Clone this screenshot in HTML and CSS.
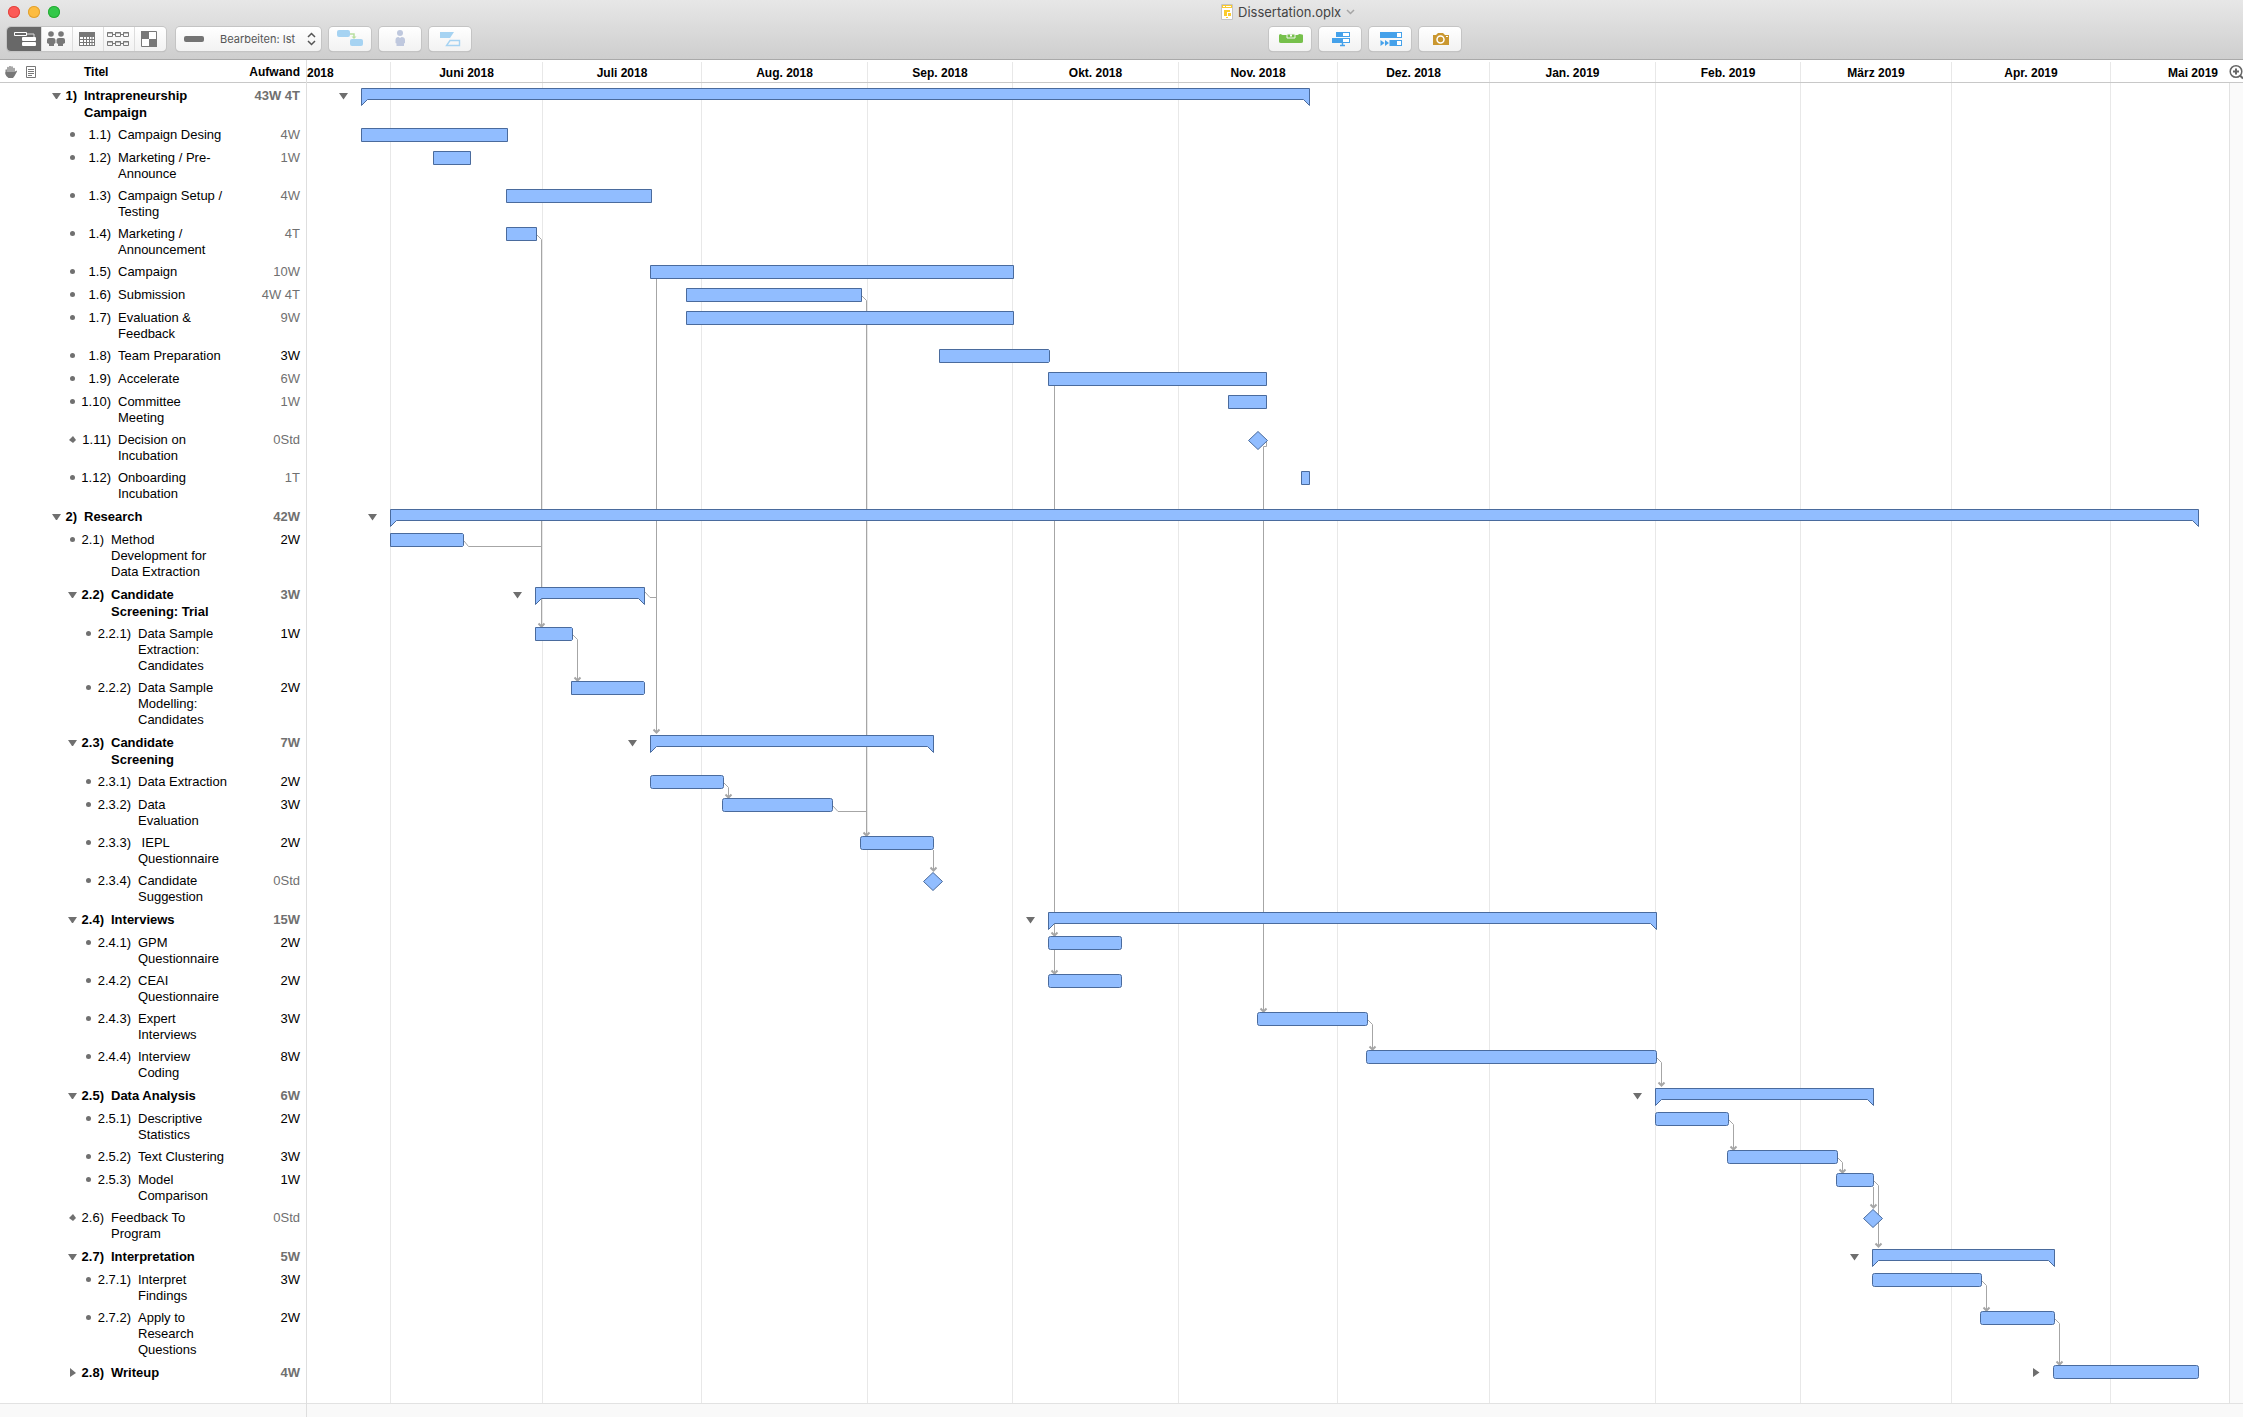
FILE: index.html
```html
<!DOCTYPE html>
<html lang="de">
<head>
<meta charset="utf-8">
<title>Dissertation.oplx</title>
<link rel="stylesheet" href="styles.css">
</head>
<body>
<header class="chrome">
  <div class="titlebar">
    <div class="lights">
      <button class="light close" aria-label="Schließen"></button>
      <button class="light minimize" aria-label="Minimieren"></button>
      <button class="light maximize" aria-label="Maximieren"></button>
    </div>
    <div class="space-before"></div>
    <h1 class="doc-title">
      <svg width="12" height="16" viewBox="0 0 12 16" aria-hidden="true"><path d="M.5.5h11v15H.5z" fill="#fff" stroke="#c4c4c4"/><path d="M1 1h10v3H1zM3 6h6v2H3zM3 8h3v4H3zM7 9h3v3H7zM5 13h2v1H5z" fill="#fbcb2d"/><path d="M2 2h2v1H2zM5 2h5v1H5z" fill="#fff"/></svg>
      <span>Dissertation.oplx</span>
      <svg width="9" height="6" viewBox="0 0 9 6" aria-hidden="true"><path d="M1 1l3.500 3.500L8 1" fill="none" stroke="#a5a5a5" stroke-width="1.500"/></svg>
    </h1>
    <div class="space-after"></div>
  </div>
  <div class="toolbar">
    <div class="segments">
      <button class="segment active" aria-label="Vorgänge"><svg width="34" height="24" viewBox="0 0 34 24"><path d="M7.500 5.500h12v3h-12z" fill="none" stroke="#fff"/><path d="M20 7h7v3" fill="none" stroke="#ddd"/><path d="M16 10h12q1 0 1 1v2q0 1-1 1H16q-1 0-1-1v-2q0-1 1-1zM16 15h12q1 0 1 1v2q0 1-1 1H16q-1 0-1-1v-2q0-1 1-1z" fill="#fff"/></svg></button>
      <button class="segment" aria-label="Ressourcen"><svg width="31" height="24" viewBox="0 0 31 24" fill="#787878"><circle cx="10" cy="7" r="2.800"/><circle cx="20" cy="7" r="2.800"/><path d="M6 13q0-2 2-2h4q2.500 0 2.500 2v3l-1.500 1v2H8v-2l-2-1zM15.500 13q0-2 2.500-2h4q2 0 2 2v3l-2 1v2h-5v-2l-1.500-1z"/></svg></button>
      <button class="segment" aria-label="Kalender"><svg width="31" height="24" viewBox="0 0 31 24"><path d="M7 5h16v14H7z" fill="#787878"/><path d="M8 10h14v8H8z" fill="#fff"/><path d="M11.500 10v8M14.500 10v8M17.500 10v8M20 10v8M8 12.500h14M8 15.500h14" stroke="#787878"/></svg></button>
      <button class="segment" aria-label="Netzwerk"><svg width="31" height="24" viewBox="0 0 31 24" fill="none" stroke="#787878"><path d="M4.500 5.500h5v4h-5zM12.500 5.500h5v4h-5zM20.500 5.500h5v4h-5zM4.500 14.500h5v4h-5zM12.500 14.500h5v4h-5zM20.500 14.500h5v4h-5zM9 7.500h3M17 7.500h3M9 16.500h3M17 16.500h3M4 6h6M12 6h6M20 6h6M4 15h6M12 15h6M20 15h6"/></svg></button>
      <button class="segment" aria-label="Stile"><svg width="32" height="24" viewBox="0 0 32 24"><path d="M7.500 4.500h15v15h-15z" fill="#fff" stroke="#787878"/><path d="M7 4h8v8H7zM15 12h8v8h-8z" fill="#787878"/></svg></button>
    </div>
    <label class="mode">
      <span class="mode-pill"></span>
      <select class="mode-select" aria-label="Bearbeitungsmodus"><option>Bearbeiten: Ist</option></select>
      <svg width="9" height="14" viewBox="0 0 9 14" aria-hidden="true"><path d="M1 5l3.500-3.500L8 5M1 9l3.500 3.500L8 9" fill="none" stroke="#555" stroke-width="1.500"/></svg>
    </label>
    <button class="tool" aria-label="Verbinden"><svg width="42" height="24" viewBox="0 0 42 24"><rect x="8" y="3" width="13" height="7" rx="2" fill="#a6d3f2"/><rect x="21" y="12" width="13" height="7" rx="2" fill="#a6d3f2"/><path d="M21 7h4v3" fill="none" stroke="#b9dfa0" stroke-width="1.500"/><path d="M22.500 9.500h5l-2.500 2.500z" fill="#b9dfa0"/></svg></button>
    <button class="tool" aria-label="Zuweisen"><svg width="42" height="24" viewBox="0 0 42 24" fill="#bfc8de"><circle cx="21" cy="6" r="3"/><path d="M16.500 13q0-3 3-3l1.500 1 1.500-1q3.500 0 3.500 3v3l-1 .5V19h-7.500v-2.500l-1-.5z"/></svg></button>
    <button class="tool" aria-label="Teilen"><svg width="42" height="24" viewBox="0 0 42 24"><path d="M11 5h14l-4 6H11z" fill="#a6d3f2"/><path d="M21 13.500h9.500v5h-13z" fill="none" stroke="#a6d3f2" stroke-width="1.400"/></svg></button>
    <div class="space-left"></div>
    <button class="tool" aria-label="Ausgleichen"><svg width="42" height="24" viewBox="0 0 42 24"><path d="M10 8.500q0-1.500 1.500-1.500l2 1h15l2-1Q34 7 34 8.500v6q0 1.500-2 1.500H12q-2 0-2-1.500z" fill="#76c04b"/><path d="M18 7h8v4h-8z" fill="#76c04b" stroke="#f5f5f5"/><path d="M21 7.500h2v2h-2z" fill="#fff"/></svg></button>
    <button class="tool" aria-label="Nachholen"><svg width="42" height="24" viewBox="0 0 42 24"><path d="M17 5h14v5H17zM13 11h18v5H13z" fill="#45a1ea"/><path d="M24 6h6v3h-6zM24 12h6v3h-6z" fill="#fff"/><path d="M23.500 15v3M21 18.500h5" stroke="#45a1ea" stroke-width="1.500"/></svg></button>
    <button class="tool" aria-label="Neu planen"><svg width="42" height="24" viewBox="0 0 42 24"><path d="M11 5h22v6H11zM20.500 13H33v6H20.500zM11.500 13l4 3-4 3zM16 13l4 3-4 3z" fill="#45a1ea"/><path d="M28 6h4v4h-4zM28 14h4v4h-4z" fill="#fff"/></svg></button>
    <button class="tool" aria-label="Momentaufnahme"><svg width="42" height="24" viewBox="0 0 42 24"><path d="M14 8h3l2-2h5l2 2h4v10H14z" fill="#ca972f"/><circle cx="21.500" cy="12.500" r="3.500" fill="none" stroke="#fff" stroke-width="1.500"/><path d="M27 9h2v1h-2z" fill="#fff"/></svg></button>
    <div class="space-right"></div>
  </div>
</header>
<main class="project">
  <section class="outline">
    <table class="tasks">
      <colgroup><col class="c-flag"><col class="c-note"><col class="c-title"><col></colgroup>
      <thead>
        <tr>
          <th><svg class="col-icon" width="12" height="12" viewBox="0 0 12 12" role="img" aria-label="Verstöße"><path d="M3 1.500v5M5 .5v6M7 .8v6M9 2.500v5M1.200 4v4" stroke="#777" stroke-width="1.300" stroke-linecap="round"/><path d="M.5 6h9l2-1.500.5 1L9.500 10 8 12H3.500Q.5 10 .5 8z" fill="#777"/></svg></th>
          <th><svg class="col-icon" width="10" height="12" viewBox="0 0 10 12" role="img" aria-label="Notiz"><path d="M.5.5h9v11h-9z" fill="#fff" stroke="#777"/><path d="M2 3.500h6M2 5.500h6M2 7.500h6M2 9.500h4" stroke="#777"/></svg></th>
          <th class="h-title">Titel</th>
          <th class="h-effort">Aufwand</th>
        </tr>
      </thead>
      <tbody>
        <tr class="group"><td></td><td></td><td><div class="task l1"><i class="open"></i><span class="num">1)</span><span>Intrapreneurship Campaign</span></div></td><td class="effort auto">43W 4T</td></tr>
        <tr><td></td><td></td><td><div class="task l2 wide"><i class="dot"></i><span class="num">1.1)</span><span>Campaign Desing</span></div></td><td class="effort auto">4W</td></tr>
        <tr><td></td><td></td><td><div class="task l2 wide"><i class="dot"></i><span class="num">1.2)</span><span>Marketing / Pre-Announce</span></div></td><td class="effort auto">1W</td></tr>
        <tr><td></td><td></td><td><div class="task l2 wide"><i class="dot"></i><span class="num">1.3)</span><span>Campaign Setup / Testing</span></div></td><td class="effort auto">4W</td></tr>
        <tr><td></td><td></td><td><div class="task l2 wide"><i class="dot"></i><span class="num">1.4)</span><span>Marketing / Announcement</span></div></td><td class="effort auto">4T</td></tr>
        <tr><td></td><td></td><td><div class="task l2 wide"><i class="dot"></i><span class="num">1.5)</span><span>Campaign</span></div></td><td class="effort auto">10W</td></tr>
        <tr><td></td><td></td><td><div class="task l2 wide"><i class="dot"></i><span class="num">1.6)</span><span>Submission</span></div></td><td class="effort auto">4W 4T</td></tr>
        <tr><td></td><td></td><td><div class="task l2 wide"><i class="dot"></i><span class="num">1.7)</span><span>Evaluation &amp; Feedback</span></div></td><td class="effort auto">9W</td></tr>
        <tr><td></td><td></td><td><div class="task l2 wide"><i class="dot"></i><span class="num">1.8)</span><span>Team Preparation</span></div></td><td class="effort">3W</td></tr>
        <tr><td></td><td></td><td><div class="task l2 wide"><i class="dot"></i><span class="num">1.9)</span><span>Accelerate</span></div></td><td class="effort auto">6W</td></tr>
        <tr><td></td><td></td><td><div class="task l2 wide"><i class="dot"></i><span class="num">1.10)</span><span>Committee Meeting</span></div></td><td class="effort auto">1W</td></tr>
        <tr><td></td><td></td><td><div class="task l2 wide"><i class="gem"></i><span class="num">1.11)</span><span>Decision on Incubation</span></div></td><td class="effort auto">0Std</td></tr>
        <tr><td></td><td></td><td><div class="task l2 wide"><i class="dot"></i><span class="num">1.12)</span><span>Onboarding Incubation</span></div></td><td class="effort auto">1T</td></tr>
        <tr class="group"><td></td><td></td><td><div class="task l1"><i class="open"></i><span class="num">2)</span><span>Research</span></div></td><td class="effort auto">42W</td></tr>
        <tr><td></td><td></td><td><div class="task l2"><i class="dot"></i><span class="num">2.1)</span><span>Method Development for Data Extraction</span></div></td><td class="effort">2W</td></tr>
        <tr class="group"><td></td><td></td><td><div class="task l2"><i class="open"></i><span class="num">2.2)</span><span>Candidate Screening: Trial</span></div></td><td class="effort auto">3W</td></tr>
        <tr><td></td><td></td><td><div class="task l3"><i class="dot"></i><span class="num">2.2.1)</span><span>Data Sample Extraction: Candidates</span></div></td><td class="effort">1W</td></tr>
        <tr><td></td><td></td><td><div class="task l3"><i class="dot"></i><span class="num">2.2.2)</span><span>Data Sample Modelling: Candidates</span></div></td><td class="effort">2W</td></tr>
        <tr class="group"><td></td><td></td><td><div class="task l2"><i class="open"></i><span class="num">2.3)</span><span>Candidate Screening</span></div></td><td class="effort auto">7W</td></tr>
        <tr><td></td><td></td><td><div class="task l3"><i class="dot"></i><span class="num">2.3.1)</span><span>Data Extraction</span></div></td><td class="effort">2W</td></tr>
        <tr><td></td><td></td><td><div class="task l3"><i class="dot"></i><span class="num">2.3.2)</span><span>Data Evaluation</span></div></td><td class="effort">3W</td></tr>
        <tr><td></td><td></td><td><div class="task l3"><i class="dot"></i><span class="num">2.3.3)</span><span>&nbsp;IEPL Questionnaire</span></div></td><td class="effort">2W</td></tr>
        <tr><td></td><td></td><td><div class="task l3"><i class="dot"></i><span class="num">2.3.4)</span><span>Candidate Suggestion</span></div></td><td class="effort auto">0Std</td></tr>
        <tr class="group"><td></td><td></td><td><div class="task l2"><i class="open"></i><span class="num">2.4)</span><span>Interviews</span></div></td><td class="effort auto">15W</td></tr>
        <tr><td></td><td></td><td><div class="task l3"><i class="dot"></i><span class="num">2.4.1)</span><span>GPM Questionnaire</span></div></td><td class="effort">2W</td></tr>
        <tr><td></td><td></td><td><div class="task l3"><i class="dot"></i><span class="num">2.4.2)</span><span>CEAI Questionnaire</span></div></td><td class="effort">2W</td></tr>
        <tr><td></td><td></td><td><div class="task l3"><i class="dot"></i><span class="num">2.4.3)</span><span>Expert Interviews</span></div></td><td class="effort">3W</td></tr>
        <tr><td></td><td></td><td><div class="task l3"><i class="dot"></i><span class="num">2.4.4)</span><span>Interview Coding</span></div></td><td class="effort">8W</td></tr>
        <tr class="group"><td></td><td></td><td><div class="task l2"><i class="open"></i><span class="num">2.5)</span><span>Data Analysis</span></div></td><td class="effort auto">6W</td></tr>
        <tr><td></td><td></td><td><div class="task l3"><i class="dot"></i><span class="num">2.5.1)</span><span>Descriptive Statistics</span></div></td><td class="effort">2W</td></tr>
        <tr><td></td><td></td><td><div class="task l3"><i class="dot"></i><span class="num">2.5.2)</span><span>Text Clustering</span></div></td><td class="effort">3W</td></tr>
        <tr><td></td><td></td><td><div class="task l3"><i class="dot"></i><span class="num">2.5.3)</span><span>Model Comparison</span></div></td><td class="effort">1W</td></tr>
        <tr><td></td><td></td><td><div class="task l2"><i class="gem"></i><span class="num">2.6)</span><span>Feedback To Program</span></div></td><td class="effort auto">0Std</td></tr>
        <tr class="group"><td></td><td></td><td><div class="task l2"><i class="open"></i><span class="num">2.7)</span><span>Interpretation</span></div></td><td class="effort auto">5W</td></tr>
        <tr><td></td><td></td><td><div class="task l3"><i class="dot"></i><span class="num">2.7.1)</span><span>Interpret Findings</span></div></td><td class="effort">3W</td></tr>
        <tr><td></td><td></td><td><div class="task l3"><i class="dot"></i><span class="num">2.7.2)</span><span>Apply to Research Questions</span></div></td><td class="effort">2W</td></tr>
        <tr class="group"><td></td><td></td><td><div class="task l2"><i class="closed"></i><span class="num">2.8)</span><span>Writeup</span></div></td><td class="effort auto">4W</td></tr>
      </tbody>
    </table>
    <div class="scroll-strip"></div>
  </section>
  <section class="timeline">
    <div class="scale">
      <div class="months">
        <span class="month first">2018</span><span class="month">Juni 2018</span><span class="month">Juli 2018</span><span class="month">Aug. 2018</span><span class="month">Sep. 2018</span><span class="month">Okt. 2018</span><span class="month">Nov. 2018</span><span class="month">Dez. 2018</span><span class="month">Jan. 2019</span><span class="month">Feb. 2019</span><span class="month">März 2019</span><span class="month">Apr. 2019</span><span class="month last">Mai 2019</span>
      </div>
      <button class="zoom-in" aria-label="Vergrößern"><svg width="14" height="16" viewBox="0 0 14 16"><circle cx="7" cy="7.500" r="5.800" fill="none" stroke="#666" stroke-width="1.500"/><path d="M4 7.500h6M7 4.500v6" stroke="#666" stroke-width="2"/><path d="M11 11.500l3 3" stroke="#666" stroke-width="2"/></svg></button>
    </div>
    <div class="canvas">
      <svg class="gantt" viewBox="307 83 1922 1320" preserveAspectRatio="none" role="img" aria-label="Gantt-Diagramm">
        <path class="grid" d="M390.500 83v1320M542.500 83v1320M701.500 83v1320M867.500 83v1320M1012.500 83v1320M1178.500 83v1320M1337.500 83v1320M1489.500 83v1320M1655.500 83v1320M1800.500 83v1320M1951.500 83v1320M2110.500 83v1320"/>
        <g class="links">
          <path d="M537 235l4.500 4.500V626"/><path d="M464 541l4.500 5.500h73"/>
          <path d="M656.500 279V733"/><path d="M645 592l5 5.500h6.500"/>
          <path d="M862 296l4.500 4.500V835"/><path d="M833 806l5 5.500h28.500"/>
          <path d="M573 635l4.500 4.500V680"/><path d="M724 783l4.500 4.500V797"/><path d="M933.500 850V870"/>
          <path d="M1054.500 386V973"/><path d="M1266.500 441v5.500h-3V1011"/>
          <path d="M1368 1020l4.500 4.500V1049"/><path d="M1657 1058l4.500 4.500V1086"/>
          <path d="M1729 1120l4.500 4.500V1149"/><path d="M1838 1158l4.500 4.500V1172"/>
          <path d="M1874 1181l4.500 4.500V1247"/><path d="M1873.500 1187V1207"/>
          <path d="M1982 1281l4.500 4.500V1310"/><path d="M2055 1319l4.500 4.500V1364"/>
        </g>
        <g class="heads">
          <path d="M538.500 623.500l3 3 3-3M653.500 729.500l3 3 3-3M863.500 832.500l3 3 3-3M574.500 677.500l3 3 3-3M725.500 794.500l3 3 3-3M930.500 867.500l3 3 3-3M1051.500 932.500l3 3 3-3M1051.500 970.500l3 3 3-3M1260.500 1008.500l3 3 3-3M1369.500 1046.500l3 3 3-3M1658.500 1082.500l3 3 3-3M1730.500 1146.500l3 3 3-3M1839.500 1169.500l3 3 3-3M1875.500 1243.500l3 3 3-3M1870.500 1204.500l3 3 3-3M1983.500 1307.500l3 3 3-3M2056.500 1361.500l3 3 3-3"/>
        </g>
        <g class="bars">
          <path d="M361.500 88.500H1309.500V105.500L1303.500 99.500H367.500L361.500 105.500z"/>
          <path d="M390.500 509.500H2198.500V526.500L2192.500 520.500H396.500L390.500 526.500z"/>
          <path d="M535.500 587.500H644.500V604.500L638.500 598.500H541.500L535.500 604.500z"/>
          <path d="M650.500 735.500H933.500V752.500L927.500 746.500H656.500L650.500 752.500z"/>
          <path d="M1048.500 912.500H1656.500V929.500L1650.500 923.500H1054.500L1048.500 929.500z"/>
          <path d="M1655.500 1088.500H1873.500V1105.500L1867.500 1099.500H1661.500L1655.500 1105.500z"/>
          <path d="M1872.500 1249.500H2054.500V1266.500L2048.500 1260.500H1878.500L1872.500 1266.500z"/>
          <rect x="361.500" y="128.500" width="146" height="13"/>
          <rect x="433.500" y="151.500" width="37" height="13"/>
          <rect x="506.500" y="189.500" width="145" height="13"/>
          <rect x="506.500" y="227.500" width="30" height="13"/>
          <rect x="650.500" y="265.500" width="363" height="13"/>
          <rect x="686.500" y="288.500" width="175" height="13"/>
          <rect x="686.500" y="311.500" width="327" height="13"/>
          <path d="M939.500 349.500h109l1 1v11l-1 1h-109z"/>
          <rect x="1048.500" y="372.500" width="218" height="13"/>
          <rect x="1228.500" y="395.500" width="38" height="13"/>
          <rect x="1301.500" y="471.500" width="8" height="13"/>
          <path d="M390.500 533.500h72l1 1v11l-1 1h-72zM535.500 627.500h36l1 1v11l-1 1h-36zM571.500 681.500h72l1 1v11l-1 1h-72z"/>
          <g class="round">
            <rect x="650.500" y="775.500" width="73" height="13" rx="2"/>
            <rect x="722.500" y="798.500" width="110" height="13" rx="2"/>
            <rect x="860.500" y="836.500" width="73" height="13" rx="2"/>
            <rect x="1048.500" y="936.500" width="73" height="13" rx="2"/>
            <rect x="1048.500" y="974.500" width="73" height="13" rx="2"/>
            <rect x="1257.500" y="1012.500" width="110" height="13" rx="2"/>
            <rect x="1366.500" y="1050.500" width="290" height="13" rx="2"/>
            <rect x="1655.500" y="1112.500" width="73" height="13" rx="2"/>
            <rect x="1727.500" y="1150.500" width="110" height="13" rx="2"/>
            <rect x="1836.500" y="1173.500" width="37" height="13" rx="2"/>
            <rect x="1872.500" y="1273.500" width="109" height="13" rx="2"/>
            <rect x="1980.500" y="1311.500" width="74" height="13" rx="2"/>
            <rect x="2053.500" y="1365.500" width="145" height="13" rx="2"/>
          </g>
          <path d="M1258 431.500l9.500 9-9.500 9-9.500-9zM933 872.500l9.500 9-9.500 9-9.500-9zM1873 1209.500l9.500 9-9.500 9-9.500-9z"/>
        </g>
        <path class="toggles" d="M339 93h9l-4.500 6.500zM368 514h9l-4.500 6.500zM513 592h9l-4.500 6.500zM628 740h9l-4.500 6.500zM1026 917h9l-4.500 6.500zM1633 1093h9l-4.500 6.500zM1850 1254h9l-4.500 6.500zM2033 1368v9l6.500-4.500z"/>
      </svg>
      <div class="gutter"></div>
    </div>
    <div class="scroll-strip"></div>
  </section>
</main>
</body>
</html>
```
FILE: styles.css
```css
* { box-sizing: border-box; }

body {
  margin: 0;
  min-height: 100vh;
  display: flex;
  flex-direction: column;
  background: #fff;
  color: #000;
  font-family: "Liberation Sans", Arial, sans-serif;
  font-size: 13px;
  line-height: 16px;
}

button { border: 0; padding: 0; background: none; }
svg { display: block; }

/* Window chrome */
.chrome {
  height: 60px;
  border-bottom: 1px solid #a9a9a9;
  background: linear-gradient(#e7e7e7, #cecece);
  font-family: Inter, sans-serif;
}
.titlebar {
  display: flex;
  align-items: center;
  height: 23px;
  padding-left: 8px;
}
.lights { display: flex; gap: 8px; }
.light { width: 12px; height: 12px; border-radius: 50%; }
.close { background: #fc5b57; box-shadow: inset 0 0 0 1px #e2463f; }
.minimize { background: #fdbc40; box-shadow: inset 0 0 0 1px #e0a032; }
.maximize { background: #34c84a; box-shadow: inset 0 0 0 1px #27aa35; }
.space-before { flex: 17; }
.space-after { flex: 13; }
.space-left { flex: 51; }
.space-right { flex: 50; }
.doc-title {
  display: flex;
  align-items: center;
  gap: 5px;
  margin: 0;
  color: #444;
  font-size: 13px;
  font-weight: 400;
}

.toolbar {
  display: flex;
  gap: 8px;
  padding: 4px 8px 0 7px;
}
.segments, .mode, .tool {
  height: 24px;
  border-radius: 4px;
  background: linear-gradient(#fff, #f2f2f2);
  box-shadow: 0 0 0 1px #c4c4c4, 0 1px 1px #aaa;
}
.segments { display: flex; margin-right: 2px; overflow: hidden; }
.segment + .segment { box-shadow: inset 1px 0 #ddd; }
.segment.active { background: #686868; }
.mode {
  display: flex;
  align-items: center;
  width: 145px;
  padding: 0 5px 0 8px;
}
.mode-pill { width: 20px; height: 6px; border-radius: 2px; background: #747474; }
.mode-select {
  flex: 1;
  height: 24px;
  padding: 0 0 0 16px;
  border: 0;
  background: none;
  appearance: none;
  color: #555;
  font: 11px Inter, sans-serif;
}
.tool { width: 42px; }

/* Project area */
.project { flex: 1; display: flex; }
.outline {
  display: flex;
  flex-direction: column;
  width: 307px;
  border-right: 1px solid #dedede;
}
.timeline {
  flex: 1;
  display: flex;
  flex-direction: column;
  min-width: 0;
}
.scroll-strip {
  height: 14px;
  margin-top: auto;
  border-top: 1px solid #e2e2e2;
  background: #f9f9f9;
}

/* Task outline */
.tasks {
  width: 100%;
  table-layout: fixed;
  border-collapse: separate;
  border-spacing: 0;
}
.c-flag, .c-note { width: 21px; }
.c-title { width: 187px; }
.tasks th {
  height: 23px;
  padding: 1px 0 0;
  border-bottom: 1px solid #c8c8c8;
  font-size: 12px;
  text-align: left;
}
.col-icon { margin-left: 5px; }
.tasks .h-title { padding-left: 42px; }
.tasks .h-effort { padding-right: 6px; text-align: right; }
.tasks tbody tr { height: 23px; }
.tasks td { padding: 4px 0 2px; vertical-align: top; }
.tasks tbody .group { height: 24px; font-weight: 700; line-height: 17px; }
.tasks .effort { padding-right: 6px; text-align: right; }
.auto { color: #707070; }

.task { display: flex; }
.l1 { padding-left: 10px; }
.l2 { padding-left: 26px; }
.l3 { padding-left: 42px; }
.num { flex: none; margin-right: 7px; text-align: right; }
.l1 .num { width: 16px; }
.l2 .num { width: 27px; }
.l2.wide .num { width: 34px; }
.l3 .num { width: 38px; }
.task i { flex: none; width: 9px; height: 15px; background: #707070; }
.open { clip-path: polygon(0 6px, 9px 6px, 5px 12px, 4px 12px); }
.closed { clip-path: polygon(2px 4px, 8px 9px, 2px 13px); }
.task .dot { width: 5px; height: 5px; margin: 5px 2px; border-radius: 50%; }
.gem { clip-path: polygon(1px 8px, 5px 4px, 8px 8px, 5px 11px); }

/* Timeline */
.scale {
  display: flex;
  height: 23px;
  border-bottom: 1px solid #c8c8c8;
}
.months {
  flex: 1;
  display: grid;
  grid-template-columns: 83fr 152fr 159fr 166fr 145fr 166fr 159fr 152fr 166fr 145fr 151fr 159fr 119fr;
  padding-top: 2px;
}
.month {
  min-width: 0;
  height: 20px;
  border-left: 1px solid #e8e8e8;
  font-size: 12px;
  font-weight: 700;
  line-height: 22px;
  text-align: center;
  white-space: nowrap;
}
.month.first { border-left: 0; text-align: left; }
.month.last { padding-left: 46px; }
.zoom-in { width: 14px; padding-top: 2px; }
.canvas { display: flex; }
.gantt { flex: 1; min-width: 0; height: 1320px; }
.gutter {
  width: 14px;
  border-left: 1px solid #e2e2e2;
  background: #fafafa;
}
.gantt path, .gantt rect { vector-effect: non-scaling-stroke; }
.grid { stroke: #e8e8e8; }
.links { fill: none; stroke: #a6a6a6; }
.heads { fill: none; stroke: #a6a6a6; stroke-width: 2px; }
.bars { fill: #91bdff; stroke: #4a6b9d; }
.toggles { fill: #6e6e6e; }
```
